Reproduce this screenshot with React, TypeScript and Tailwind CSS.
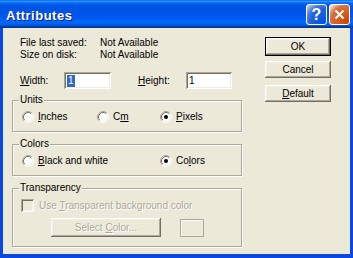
import React from 'react'

const FACE = 'bg-[#ECE9D8]'

// classic 3d bevel used by the dialog buttons
const RAISED =
  'shadow-[inset_-1px_-1px_#716F64,inset_1px_1px_#fff,inset_-2px_-2px_#ACA899,inset_2px_2px_#F1EFE2]'
const SUNKEN =
  'shadow-[inset_1px_1px_#ACA899,inset_-1px_-1px_#fff,inset_2px_2px_#716F64,inset_-2px_-2px_#F1EFE2]'

function UL({ children }: { children: React.ReactNode }) {
  return <span className="underline underline-offset-[1px]">{children}</span>
}

function TitleBar() {
  return (
    <div className="h-[28px] shrink-0 flex items-start pl-[6px] pr-[3px] bg-[linear-gradient(to_bottom,#0058EE_0%,#3593FF_4%,#288EFF_6%,#127DFF_8%,#036FFC_10%,#0262EE_14%,#0057E5_20%,#0054E3_24%,#0055EB_56%,#005BF5_66%,#026AFE_76%,#0062EF_86%,#0052D6_92%,#0040AB_94%,#003092_100%)]">
      <span className="mt-[8px] leading-[16px] text-[13px] font-bold text-white tracking-[0.5px] [text-shadow:1px_1px_#0A1883]">
        Attributes
      </span>
      <div className="ml-auto mt-[4px] flex gap-[2px]">
        <div className="w-[21px] h-[21px] rounded-[3px] border border-white flex items-center justify-center bg-[radial-gradient(circle_at_90%_90%,#0054E9_0%,#2263D5_55%,#4479E4_70%,#A3BBEC_90%,#fff_100%)]">
          <span className="text-white font-bold text-[16px] leading-[16px]">?</span>
        </div>
        <div className="w-[21px] h-[21px] rounded-[3px] border border-white flex items-center justify-center bg-[radial-gradient(circle_at_90%_90%,#CC4600_0%,#DC6527_55%,#CD7546_70%,#FFCCB2_90%,#fff_100%)]">
          <svg width="11" height="11" viewBox="0 0 11 11">
            <path d="M1.5 1.5 L9.5 9.5 M9.5 1.5 L1.5 9.5" stroke="#fff" strokeWidth="2" />
          </svg>
        </div>
      </div>
    </div>
  )
}

function TextBox({ value, selected, className }: { value: string; selected?: boolean; className?: string }) {
  return (
    <div className={`h-[17px] bg-white ${SUNKEN} flex items-center pl-[3px] ${className ?? ''}`}>
      {selected ? (
        <span className="bg-[#316AC5] text-white leading-[12px] px-[1px]">{value}</span>
      ) : (
        <span className="leading-[12px]">{value}</span>
      )}
    </div>
  )
}

function Radio({ checked }: { checked?: boolean }) {
  return (
    <svg width="12" height="12" viewBox="0 0 12 12" className="shrink-0">
      <circle cx="6" cy="6" r="5" fill="#fff" />
      <path d="M2.11 9.89 A5.5 5.5 0 0 1 9.89 2.11" stroke="#ACA899" fill="none" />
      <path d="M9.89 2.11 A5.5 5.5 0 0 1 2.11 9.89" stroke="#fff" fill="none" />
      <path d="M2.82 9.18 A4.5 4.5 0 0 1 9.18 2.82" stroke="#716F64" fill="none" />
      <path d="M9.18 2.82 A4.5 4.5 0 0 1 2.82 9.18" stroke="#F1EFE2" fill="none" />
      {checked && <circle cx="6" cy="6" r="2" fill="#000" />}
    </svg>
  )
}

function Group({ title, children, className }: { title: string; children: React.ReactNode; className?: string }) {
  return (
    <fieldset className={`border border-[#ACA899] shadow-[inset_1px_1px_#fff,1px_1px_#fff] ${className ?? ''}`}>
      <legend className={`ml-[6px] px-[1px] ${FACE} leading-[12px]`}>{title}</legend>
      {children}
    </fieldset>
  )
}

function Button({
  children,
  isDefault,
  disabled,
  className,
}: {
  children: React.ReactNode
  isDefault?: boolean
  disabled?: boolean
  className?: string
}) {
  const label = (
    <span className={disabled ? 'text-[#ACA899] [text-shadow:1px_1px_#fff]' : ''}>{children}</span>
  )
  if (isDefault) {
    return (
      <div className={`border border-black ${className ?? ''}`}>
        <div className={`h-full ${FACE} ${RAISED} flex items-center justify-center`}>{label}</div>
      </div>
    )
  }
  return (
    <div className={`${FACE} ${RAISED} flex items-center justify-center ${className ?? ''}`}>{label}</div>
  )
}

export default function App() {
  return (
    <div className="w-[353px] h-[258px] flex flex-col bg-[#0A48E1] font-['Liberation_Sans',Arial,sans-serif] text-[10px] leading-[12px] text-black select-none">
      <TitleBar />
      <div className={`flex-1 mx-[3px] mb-[4px] ${FACE} flex pl-[9px] pt-[9px]`}>
        {/* left side: info, size and groups */}
        <div className="w-[230px] flex flex-col">
          <div className="pl-[8px]">
            <div className="flex">
              <span className="w-[80px]">File last saved:</span>
              <span>Not Available</span>
            </div>
            <div className="flex">
              <span className="w-[80px]">Size on disk:</span>
              <span>Not Available</span>
            </div>
          </div>

          <div className="mt-[11px] pl-[8px] flex items-center h-[17px]">
            <span className="w-[44px]">
              <UL>W</UL>idth:
            </span>
            <TextBox value="1" selected className="w-[47px]" />
            <span className="ml-[27px] w-[48px]">
              <UL>H</UL>eight:
            </span>
            <TextBox value="1" className="w-[46px]" />
          </div>

          <Group title="Units" className="mt-[5px]">
            <div className="flex items-center h-[12px] mt-[5px] mb-[8px] pl-[9px]">
              <div className="w-[75px] flex items-center gap-[4px]">
                <Radio />
                <span>
                  <UL>I</UL>nches
                </span>
              </div>
              <div className="w-[63px] flex items-center gap-[4px]">
                <Radio />
                <span>
                  C<UL>m</UL>
                </span>
              </div>
              <div className="flex items-center gap-[4px]">
                <Radio checked />
                <span>
                  <UL>P</UL>ixels
                </span>
              </div>
            </div>
          </Group>

          <Group title="Colors" className="mt-[6px]">
            <div className="flex items-center h-[12px] mt-[5px] mb-[8px] pl-[9px]">
              <div className="w-[138px] flex items-center gap-[4px]">
                <Radio />
                <span>
                  <UL>B</UL>lack and white
                </span>
              </div>
              <div className="flex items-center gap-[4px]">
                <Radio checked />
                <span>
                  Co<UL>l</UL>ors
                </span>
              </div>
            </div>
          </Group>

          <Group title="Transparency" className="mt-[6px]">
            <div className="flex items-center mt-[5px] pl-[8px]">
              <div className={`w-[13px] h-[13px] ${FACE} ${SUNKEN}`} />
              <span className="ml-[5px] text-[#ACA899] [text-shadow:1px_1px_#fff]">
                Use <UL>T</UL>ransparent background color
              </span>
            </div>
            <div className="flex items-center mt-[6px] mb-[9px] pl-[38px]">
              <Button disabled className="w-[110px] h-[19px]">
                Select <UL>C</UL>olor...
              </Button>
              <div className="ml-[19px] w-[24px] h-[18px] border border-[#ACA899] shadow-[inset_1px_1px_#fff]" />
            </div>
          </Group>
        </div>

        {/* right side: dialog buttons */}
        <div className="ml-[23px] w-[66px] flex flex-col">
          <Button isDefault className="h-[19px]">
            OK
          </Button>
          <Button className="h-[17px] mt-[5px]">Cancel</Button>
          <Button className="h-[17px] mt-[7px]">
            <UL>D</UL>efault
          </Button>
        </div>
      </div>
    </div>
  )
}
